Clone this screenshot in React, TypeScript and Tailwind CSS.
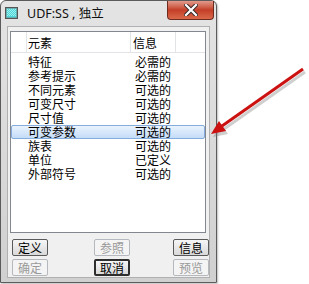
import React from "react";

const cjk = { fontFamily: '"Noto Sans CJK SC", "Noto Sans", sans-serif' };

function Btn({ label, disabled, def, className }: { label: string; disabled?: boolean; def?: boolean; className?: string }) {
  const base =
    "flex h-[17px] w-[36px] items-center justify-center rounded-[2px] text-[12px] leading-[12px] ";
  const style = disabled
    ? "border border-[#b5b9bd] bg-[#f4f4f4] text-[#9a9a9a]"
    : def
    ? "border-2 border-[#2e2e2e] bg-gradient-to-b from-[#f6f6f6] to-[#d9d9d9] text-black"
    : "border border-[#5a5a5a] bg-gradient-to-b from-[#f6f6f6] to-[#d9d9d9] text-black";
  return (
    <div className={base + style + " " + (className ?? "")} style={cjk}>
      {label}
    </div>
  );
}

const rows: [string, string][] = [
  ["特征", "必需的"],
  ["参考提示", "必需的"],
  ["不同元素", "可选的"],
  ["可变尺寸", "可选的"],
  ["尺寸值", "可选的"],
  ["可变参数", "可选的"],
  ["族表", "可选的"],
  ["单位", "已定义"],
  ["外部符号", "可选的"],
];

export default function App() {
  return (
    <div className="relative h-[284px] w-[309px] overflow-hidden bg-white">
      <div className="flex h-[283px] w-[217px] flex-col rounded-t-[6px] border border-[#5b5b5b] bg-gradient-to-b from-[#e4e4e4] to-[#d0d0d0] shadow-[1px_1px_2px_rgba(0,0,0,0.25)]">
        {/* title bar */}
        <div className="flex h-[25px] items-start">
          <svg width="13" height="12" viewBox="0 0 13 12" className="ml-[4px] mt-[6px]">
            <rect x="0.5" y="0.5" width="12" height="11" fill="#7a8a8a" stroke="#555" />
            <rect x="1.5" y="1.5" width="10" height="9" fill="#4fd6d9" />
            <path d="M2 2h1v1H2zM4 2h1v1H4zM6 2h1v1H6zM8 2h1v1H8zM10 2h1v1h-1zM3 3h1v1H3zM5 3h1v1H5zM7 3h1v1H7zM9 3h1v1H9zM2 4h1v1H2zM4 4h1v1H4zM6 4h1v1H6zM8 4h1v1H8zM10 4h1v1h-1zM3 5h1v1H3zM5 5h1v1H5zM7 5h1v1H7zM9 5h1v1H9zM2 6h1v1H2zM4 6h1v1H4zM6 6h1v1H6zM8 6h1v1H8zM10 6h1v1h-1zM3 7h1v1H3zM5 7h1v1H5zM7 7h1v1H7zM9 7h1v1H9zM2 8h1v1H2zM4 8h1v1H4zM6 8h1v1H6zM8 8h1v1H8zM10 8h1v1h-1z" fill="#9cf0f0" />
          </svg>
          <div
            className="ml-[9px] mt-[5px] text-[12.5px] leading-[16px] text-[#111]"
            style={{ fontFamily: '"Noto Sans", "Noto Sans CJK SC", sans-serif' }}
          >
            UDF:SS , 独立
          </div>
          <div className="ml-auto mr-[2px] flex h-[19px] w-[47px] items-center justify-center rounded-b-[4px] border border-t-0 border-[#6e2b20] bg-gradient-to-b from-[#e19a8c] via-[#c43e26] to-[#d9684a]">
            <svg width="14" height="12" viewBox="0 0 14 12">
              <path d="M2 1 L12 11 M12 1 L2 11" stroke="#3a2a2a" strokeWidth="4.2" strokeLinecap="square" />
              <path d="M2 1 L12 11 M12 1 L2 11" stroke="#ffffff" strokeWidth="2.2" strokeLinecap="square" />
            </svg>
          </div>
        </div>
        {/* client */}
        <div className="mx-[6px] mb-[4px] flex flex-1 flex-col border border-[#b0b0b0] bg-[#f0f0f0]">
          <div className="ml-[2px] mt-[4px] flex h-[202px] w-[196px] flex-col border border-[#828790] bg-white" style={cjk}>
            {/* header */}
            <div className="flex h-[21px] items-stretch border-b border-[#e2e3e6] text-[12px] leading-[12px] text-black">
              <div className="w-[16px] border-r border-[#e3e4e6]" />
              <div className="flex w-[104px] items-center border-r border-[#e3e4e6] pl-[1px] pt-[2px]">元素</div>
              <div className="flex w-[45px] items-center border-r border-[#e3e4e6] pl-[2px] pt-[2px]">信息</div>
              <div className="flex-1" />
            </div>
            <div className="mt-[2px] flex flex-col">
              {rows.map(([a, b], i) => {
                const sel = i === 5;
                return (
                  <div
                    key={a}
                    className={
                      "flex h-[14px] items-center text-[12px] leading-[12px] text-black " +
                      (sel
                        ? "rounded-[2px] border border-[#84acdd] bg-gradient-to-b from-[#eaf3fd] to-[#c4dcf8]"
                        : "border border-transparent")
                    }
                  >
                    <div className="w-[16px]" />
                    <div className="w-[104px]">{a}</div>
                    <div className="pl-[3px]">{b}</div>
                  </div>
                );
              })}
            </div>
          </div>
          {/* buttons */}
          <div className="ml-[4px] mt-[6px] flex flex-col gap-[3px]">
            <div className="flex">
              <Btn label="定义" />
              <Btn label="参照" disabled className="ml-[46px]" />
              <Btn label="信息" className="ml-[43px]" />
            </div>
            <div className="flex">
              <Btn label="确定" disabled />
              <Btn label="取消" def className="ml-[46px]" />
              <Btn label="预览" disabled className="ml-[43px]" />
            </div>
          </div>
        </div>
      </div>
      {/* red arrow annotation */}
      <svg className="pointer-events-none absolute left-0 top-0" width="309" height="284" viewBox="0 0 309 284">
        <g opacity="0.35" transform="translate(2,3)">
          <line x1="303" y1="69" x2="222" y2="126" stroke="#777" strokeWidth="3" />
          <polygon points="211,134 226,131 219,121" fill="#777" />
        </g>
        <line x1="303" y1="69" x2="222" y2="126" stroke="#cc1111" strokeWidth="3" />
        <polygon points="211,134 226,131 219,121" fill="#cc1111" />
      </svg>
    </div>
  );
}
